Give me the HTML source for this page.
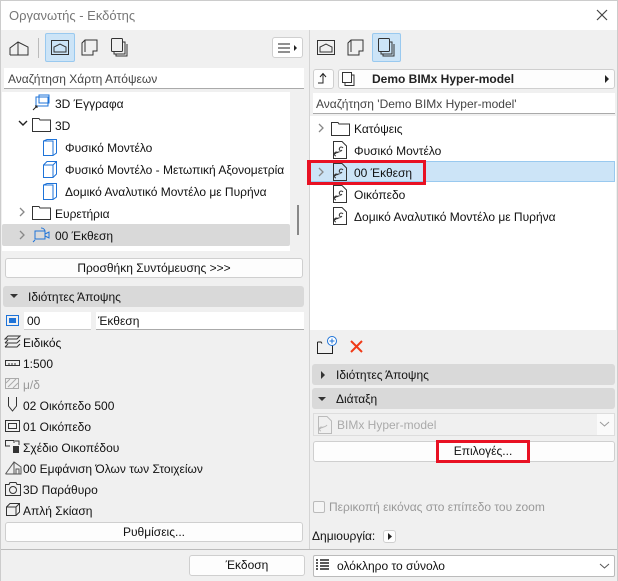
<!DOCTYPE html>
<html><head><meta charset="utf-8"><style>
*{box-sizing:border-box;margin:0;padding:0}
body{width:618px;height:581px;background:#f0f0f0;font-family:"Liberation Sans","DejaVu Sans",sans-serif;font-size:12px;color:#111;position:relative;overflow:hidden}
.a{position:absolute}
.t{position:absolute;white-space:nowrap}
.btn{position:absolute;background:#fdfdfd;border:1px solid #cfcfcf;border-radius:3px;text-align:center;line-height:18px}
.fld{position:absolute;background:#fff;border-bottom:1px solid #aaa}
.hdr{position:absolute;background:#d9d9d9;border-radius:3px;line-height:20px}
svg{position:absolute;overflow:visible}
</style></head><body>
<div class="a" style="left:0;top:0;width:618px;height:30px;background:#fff;border:1px solid #ccc;border-bottom:none"></div>
<div class="t" style="left:9px;top:8px;font-size:13px;color:#777">Οργανωτής - Εκδότης</div>
<svg style="left:597px;top:10px" width="10" height="10"><path d="M0 0L10 10M10 0L0 10" stroke="#444" stroke-width="1.2"/></svg>
<div class="a" style="left:0;top:30px;width:1px;height:551px;background:#ccc"></div>
<div class="a" style="left:617px;top:30px;width:1px;height:551px;background:#ccc"></div>
<div class="a" style="left:309px;top:30px;width:1px;height:519px;background:#d4d4d4"></div>

<!-- left toolbar -->
<svg style="left:9px;top:40px" width="20" height="16"><path d="M1 15V8L9 2L19 7V15H1M9 2V15" fill="none" stroke="#333"/></svg>
<div class="a" style="left:38px;top:38px;width:1px;height:20px;background:#bbb"></div>
<div class="a" style="left:45px;top:33px;width:30px;height:29px;background:#cce4f7;border:1px solid #99c9ef;border-radius:2px"></div>
<svg style="left:51px;top:40px" width="18" height="15"><rect x="0.5" y="0.5" width="17" height="14" fill="none" stroke="#333"/><path d="M3 12V7L9 4L15 7V12Z" fill="none" stroke="#333"/></svg>
<svg style="left:81px;top:39px" width="17" height="17"><path d="M1 16V4L4 1H16V12H12V16Z M4 1V13" fill="none" stroke="#333"/></svg>
<svg style="left:111px;top:38px" width="17" height="19"><rect x="0.5" y="0.5" width="11" height="13" fill="none" stroke="#333" rx="1"/><path d="M3 14V16H14V4H12M5 16V18H16V6" fill="none" stroke="#333"/></svg>
<div class="btn" style="left:272px;top:37px;width:31px;height:21px;background:#fff"></div>
<svg style="left:278px;top:43px" width="20" height="10"><path d="M0 1H12M0 5H12M0 9H12" stroke="#222"/><path d="M16 2L19 5L16 8Z" fill="#222"/></svg>

<div class="fld" style="left:4px;top:68px;width:300px;height:21px"></div>
<div class="t" style="left:8px;top:72px;color:#444">Αναζήτηση Χάρτη Απόψεων</div>

<div class="a" style="left:2px;top:92px;width:288px;height:159px;background:#fff"></div>
<div class="a" style="left:297px;top:205px;width:2px;height:30px;background:#888"></div>
<div class="a" style="left:307px;top:160px;width:2px;height:25px;background:#e81123"></div>
<div class="a" style="left:2px;top:224px;width:288px;height:22px;background:#d9d9d9;border-radius:2px"></div>

<svg style="left:32px;top:95px" width="18" height="16"><rect x="4" y="2" width="12" height="9" fill="none" stroke="#1e73d8"/><rect x="7" y="0" width="10" height="8" fill="none" stroke="#1e73d8"/><path d="M1 15L5 11M3 11H5V13" stroke="#222" fill="none"/></svg>
<div class="t" style="left:55px;top:97px">3D Έγγραφα</div>
<svg style="left:19px;top:121px" width="9" height="6"><path d="M0 0L4 4L8 0" fill="none" stroke="#222" stroke-width="1.4"/></svg>
<svg style="left:32px;top:118px" width="19" height="14"><path d="M0.5 0.5H7L8 2H18.5V13.5H0.5Z" fill="#fff" stroke="#333"/></svg>
<div class="t" style="left:55px;top:119px">3D</div>
<svg style="left:43px;top:139px" width="14" height="17"><path d="M0.5 2L4 0.5H13.5V14L10 16.5H0.5Z M0.5 2H10V16.5" fill="none" stroke="#1e73d8"/></svg>
<div class="t" style="left:65px;top:141px">Φυσικό Μοντέλο</div>
<svg style="left:43px;top:161px" width="14" height="17"><path d="M0.5 4L4 0.5H13.5V13L10 16.5H0.5Z M0.5 4H10V16.5M10 4L13.5 0.5" fill="none" stroke="#1e73d8"/></svg>
<div class="t" style="left:65px;top:163px">Φυσικό Μοντέλο - Μετωπική Αξονομετρία</div>
<svg style="left:43px;top:183px" width="14" height="17"><path d="M0.5 2L4 0.5H13.5V14L10 16.5H0.5Z M0.5 2H10V16.5" fill="none" stroke="#1e73d8"/></svg>
<div class="t" style="left:65px;top:185px">Δομικό Αναλυτικό Μοντέλο με Πυρήνα</div>
<svg style="left:20px;top:208px" width="6" height="9"><path d="M0 0L4 4L0 8" fill="none" stroke="#888" stroke-width="1.3"/></svg>
<svg style="left:32px;top:206px" width="19" height="14"><path d="M0.5 0.5H7L8 2H18.5V13.5H0.5Z" fill="#fff" stroke="#333"/></svg>
<div class="t" style="left:55px;top:207px">Ευρετήρια</div>
<svg style="left:20px;top:231px" width="6" height="9"><path d="M0 0L4 4L0 8" fill="none" stroke="#888" stroke-width="1.3"/></svg>
<svg style="left:33px;top:227px" width="18" height="16"><rect x="2" y="4" width="10" height="8" fill="none" stroke="#1e73d8"/><path d="M12 7L16 5V11L12 9M8 1A4 4 0 0 1 12 4M2 13L0 15" fill="none" stroke="#1e73d8"/></svg>
<div class="t" style="left:55px;top:229px">00 Έκθεση</div>

<div class="btn" style="left:5px;top:258px;width:298px;height:20px">Προσθήκη Συντόμευσης &gt;&gt;&gt;</div>
<div class="hdr" style="left:3px;top:286px;width:301px;height:21px"></div>
<svg style="left:10px;top:294px" width="8" height="5"><path d="M0 0H8L4 4Z" fill="#333"/></svg>
<div class="t" style="left:28px;top:290px">Ιδιότητες Άποψης</div>

<svg style="left:6px;top:315px" width="13" height="11"><rect x="0.5" y="0.5" width="12" height="10" fill="none" stroke="#1e73d8"/><rect x="3" y="3" width="7" height="5" fill="#1e73d8"/></svg>
<div class="fld" style="left:24px;top:312px;width:67px;height:18px;border-bottom-color:#ccc"></div>
<div class="t" style="left:27px;top:314px">00</div>
<div class="fld" style="left:96px;top:312px;width:208px;height:18px"></div>
<div class="t" style="left:98px;top:314px">Έκθεση</div>

<div class="t" style="left:23px;top:336px">Ειδικός</div>
<svg style="left:4px;top:335px" width="17" height="14"><path d="M1 4L4 1H16L13 4ZM1 8L4 5M13 8L16 5M1 8H13M1 12L4 9M1 12H13L16 9" fill="none" stroke="#333"/></svg>
<svg style="left:5px;top:360px" width="15" height="6"><rect x="0.5" y="0.5" width="14" height="5" fill="none" stroke="#333"/><path d="M4 3V5M7 3V5M10 3V5" stroke="#333"/></svg>
<div class="t" style="left:23px;top:357px">1:500</div>
<svg style="left:5px;top:378px" width="14" height="11"><rect x="0.5" y="0.5" width="13" height="10" fill="none" stroke="#aaa"/><path d="M1 5L5 1M3 9L11 1M8 10L13 5" stroke="#aaa"/></svg>
<div class="t" style="left:23px;top:378px;color:#999">μ/δ</div>
<svg style="left:8px;top:397px" width="9" height="15"><path d="M0.5 0V9L4.5 14L8.5 9V0" fill="none" stroke="#333"/></svg>
<div class="t" style="left:23px;top:399px">02 Οικόπεδο 500</div>
<svg style="left:5px;top:420px" width="15" height="12"><rect x="0.5" y="0.5" width="14" height="11" fill="none" stroke="#333"/><rect x="3.5" y="3.5" width="8" height="5" fill="none" stroke="#333"/></svg>
<div class="t" style="left:23px;top:420px">01 Οικόπεδο</div>
<svg style="left:5px;top:440px" width="16" height="14"><path d="M5 6H0.5V0.5H9V3" fill="none" stroke="#333"/><rect x="8" y="6" width="6" height="7" fill="#333"/><path d="M10 1H14V5" fill="none" stroke="#333"/></svg>
<div class="t" style="left:23px;top:441px">Σχέδιο Οικοπέδου</div>
<svg style="left:5px;top:460px" width="17" height="15"><path d="M0.5 14L9 2L16 7V14H0.5M9 2V14M11 14V9H14V14" fill="none" stroke="#555"/></svg>
<div class="t" style="left:23px;top:462px">00 Εμφάνιση Όλων των Στοιχείων</div>
<svg style="left:5px;top:482px" width="16" height="14"><path d="M0.5 2.5H4L5 0.5H11L12 2.5H15.5V13.5H0.5Z" fill="none" stroke="#333"/><circle cx="8" cy="8" r="3.5" fill="none" stroke="#333"/></svg>
<div class="t" style="left:23px;top:483px">3D Παράθυρο</div>
<svg style="left:6px;top:503px" width="14" height="13"><path d="M0.5 4L4 0.5H13.5V9L10 12.5H0.5Z M0.5 4H10V12.5M10 4L13.5 0.5" fill="none" stroke="#333"/></svg>
<div class="t" style="left:23px;top:504px">Απλή Σκίαση</div>
<div class="btn" style="left:5px;top:522px;width:298px;height:20px">Ρυθμίσεις...</div>

<div class="a" style="left:1px;top:549px;width:616px;height:1px;background:#bbb"></div>
<div class="btn" style="left:189px;top:555px;width:116px;height:21px">Έκδοση</div>

<!-- right toolbar -->
<svg style="left:317px;top:40px" width="18" height="15"><rect x="0.5" y="0.5" width="17" height="14" fill="none" stroke="#333"/><path d="M3 12V7L9 4L15 7V12Z" fill="none" stroke="#333"/></svg>
<svg style="left:347px;top:39px" width="17" height="17"><path d="M1 16V4L4 1H16V12H12V16Z M4 1V13" fill="none" stroke="#333"/></svg>
<div class="a" style="left:372px;top:33px;width:29px;height:29px;background:#cce4f7;border:1px solid #99c9ef;border-radius:2px"></div>
<svg style="left:378px;top:38px" width="17" height="19"><rect x="0.5" y="0.5" width="11" height="13" fill="none" stroke="#333" rx="1"/><path d="M3 14V16H14V4H12M5 16V18H16V6" fill="none" stroke="#333"/></svg>
<div class="btn" style="left:313px;top:69px;width:21px;height:20px"></div>
<svg style="left:318px;top:73px" width="12" height="11"><path d="M0 10H5V1M2 4L5 0.5L8 4" fill="none" stroke="#222"/></svg>
<div class="btn" style="left:338px;top:69px;width:277px;height:20px"></div>
<svg style="left:342px;top:72px" width="14" height="15"><rect x="0.5" y="0.5" width="9" height="10" fill="none" stroke="#333"/><path d="M3 11V13.5H12V3H10" fill="none" stroke="#333"/></svg>
<div class="t" style="left:372px;top:72px;font-weight:bold;color:#222">Demo BIMx Hyper-model</div>
<svg style="left:605px;top:75px" width="5" height="8"><path d="M0 0L4 4L0 8Z" fill="#222"/></svg>
<div class="fld" style="left:313px;top:93px;width:302px;height:21px"></div>
<div class="t" style="left:316px;top:97px;color:#444">Αναζήτηση 'Demo BIMx Hyper-model'</div>

<div class="a" style="left:310px;top:116px;width:306px;height:214px;background:#fff"></div>
<div class="a" style="left:310px;top:161px;width:305px;height:21px;background:#cce4f7;border:1px solid #99c9ef"></div>
<svg style="left:319px;top:124px" width="6" height="9"><path d="M0 0L4 4L0 8" fill="none" stroke="#888" stroke-width="1.3"/></svg>
<svg style="left:331px;top:122px" width="19" height="14"><path d="M0.5 0.5H7L8 2H18.5V13.5H0.5Z" fill="#fff" stroke="#333"/></svg>
<div class="t" style="left:354px;top:122px">Κατόψεις</div>
<svg style="left:333px;top:141px" width="14" height="18"><path d="M0.5 0.5H9L13.5 5V17.5H0.5Z" fill="none" stroke="#333"/><path d="M2 13C4 10 7 12 9 9M3 15A2 2 0 1 1 5 12M8 10A2 2 0 1 1 10 7" fill="none" stroke="#333"/></svg>
<div class="t" style="left:354px;top:144px">Φυσικό Μοντέλο</div>
<svg style="left:319px;top:168px" width="6" height="9"><path d="M0 0L4 4L0 8" fill="none" stroke="#888" stroke-width="1.3"/></svg>
<svg style="left:333px;top:163px" width="14" height="18"><path d="M0.5 0.5H9L13.5 5V17.5H0.5Z" fill="none" stroke="#333"/><path d="M2 13C4 10 7 12 9 9M3 15A2 2 0 1 1 5 12M8 10A2 2 0 1 1 10 7" fill="none" stroke="#333"/></svg>
<div class="t" style="left:354px;top:166px">00 Έκθεση</div>
<svg style="left:333px;top:185px" width="14" height="18"><path d="M0.5 0.5H9L13.5 5V17.5H0.5Z" fill="none" stroke="#333"/><path d="M2 13C4 10 7 12 9 9M3 15A2 2 0 1 1 5 12M8 10A2 2 0 1 1 10 7" fill="none" stroke="#333"/></svg>
<div class="t" style="left:354px;top:188px">Οικόπεδο</div>
<svg style="left:333px;top:207px" width="14" height="18"><path d="M0.5 0.5H9L13.5 5V17.5H0.5Z" fill="none" stroke="#333"/><path d="M2 13C4 10 7 12 9 9M3 15A2 2 0 1 1 5 12M8 10A2 2 0 1 1 10 7" fill="none" stroke="#333"/></svg>
<div class="t" style="left:354px;top:210px">Δομικό Αναλυτικό Μοντέλο με Πυρήνα</div>
<div class="a" style="left:308px;top:160px;width:118px;height:25px;border:3px solid #e81123"></div>

<svg style="left:317px;top:336px" width="22" height="18"><path d="M0.5 6V17.5H15.5V9M0.5 6H4L5 7.5" fill="none" stroke="#222"/><circle cx="15" cy="5" r="4.5" fill="#fff" stroke="#1e73d8"/><path d="M15 2.5V7.5M12.5 5H17.5" stroke="#1e73d8"/></svg>
<svg style="left:350px;top:340px" width="13" height="13"><path d="M1 1L12 12M12 1L1 12" stroke="#f03a17" stroke-width="2"/></svg>

<div class="hdr" style="left:312px;top:364px;width:303px;height:21px"></div>
<svg style="left:321px;top:371px" width="5" height="8"><path d="M0 0L4 4L0 8Z" fill="#333"/></svg>
<div class="t" style="left:336px;top:368px">Ιδιότητες Άποψης</div>
<div class="hdr" style="left:312px;top:388px;width:303px;height:21px"></div>
<svg style="left:318px;top:397px" width="8" height="5"><path d="M0 0H8L4 4Z" fill="#333"/></svg>
<div class="t" style="left:336px;top:392px">Διάταξη</div>
<div class="a" style="left:313px;top:413px;width:302px;height:23px;background:#f0f0f0;border:1px solid #ddd"></div>
<div class="a" style="left:597px;top:414px;width:17px;height:21px;background:#fafafa"></div>
<svg style="left:318px;top:416px" width="14" height="18"><path d="M0.5 0.5H9L13.5 5V17.5H0.5Z" fill="none" stroke="#bbb"/><path d="M2 13C4 10 7 12 9 9M3 15A2 2 0 1 1 5 12" fill="none" stroke="#bbb"/></svg>
<div class="t" style="left:337px;top:418px;color:#aaa">BIMx Hyper-model</div>
<svg style="left:600px;top:422px" width="9" height="5"><path d="M0 0L4.5 4L9 0" fill="none" stroke="#999"/></svg>
<div class="btn" style="left:313px;top:441px;width:302px;height:21px"></div>
<div class="a" style="left:436px;top:440px;width:94px;height:23px;border:3px solid #e81123;background:#fdfdfd"></div>
<div class="t" style="left:437px;top:444px;width:92px;text-align:center">Επιλογές...</div>

<div class="a" style="left:313px;top:501px;width:12px;height:12px;border:1px solid #bbb;border-radius:2px;background:#f5f5f5"></div>
<div class="t" style="left:329px;top:500px;color:#999">Περικοπή εικόνας στο επίπεδο του zoom</div>
<div class="t" style="left:312px;top:529px">Δημιουργία:</div>
<div class="btn" style="left:383px;top:530px;width:13px;height:13px"></div>
<svg style="left:388px;top:533px" width="4" height="7"><path d="M0 0L4 3.5L0 7Z" fill="#222"/></svg>

<div class="a" style="left:313px;top:555px;width:302px;height:22px;background:#fff;border:1px solid #bbb;border-radius:2px"></div>
<svg style="left:316px;top:559px" width="13" height="13"><path d="M0 1H2M0 4H2M0 7H2M0 10H2M4 1H13M4 4H13M4 7H13M4 10H13" stroke="#222" stroke-width="1.5"/></svg>
<div class="t" style="left:337px;top:559px">ολόκληρο το σύνολο</div>
<svg style="left:600px;top:564px" width="9" height="5"><path d="M0 0L4.5 4L9 0" fill="none" stroke="#555"/></svg>
</body></html>
